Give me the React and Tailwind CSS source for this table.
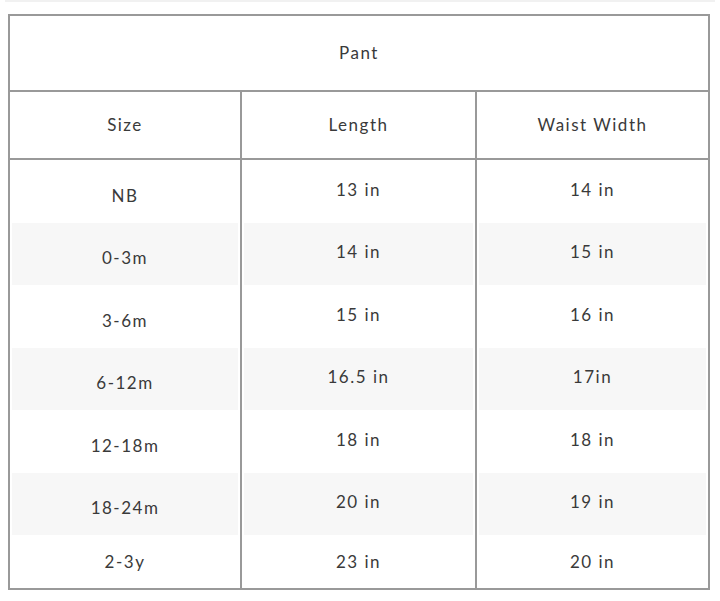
import React from "react";

const rows = [
  ["NB", "13 in", "14 in"],
  ["0-3m", "14 in", "15 in"],
  ["3-6m", "15 in", "16 in"],
  ["6-12m", "16.5 in", "17in"],
  ["12-18m", "18 in", "18 in"],
  ["18-24m", "20 in", "19 in"],
  ["2-3y", "23 in", "20 in"],
];

export default function App() {
  return (
    <div
      className="w-[720px] h-[601px] bg-white text-[#3a3a3a] text-[17px] tracking-[1.5px]"
      style={{ fontFamily: "Lato, 'Open Sans', sans-serif" }}
    >
      <div className="h-[2px] mx-[5px] bg-[#f1f1f1]" />
      <div className="pt-[12px] pl-[8px]">
        <div className="w-[702px] border-2 border-[#999999] flex flex-col">
          <div className="h-[76px] flex items-center justify-center border-b-2 border-[#999999]">
            Pant
          </div>
          <div className="h-[68px] flex border-b-2 border-[#999999]">
            <div className="w-[232px] flex items-center justify-center border-r-2 border-[#999999]">Size</div>
            <div className="w-[235px] flex items-center justify-center border-r-2 border-[#999999]">Length</div>
            <div className="flex-1 flex items-center justify-center">Waist Width</div>
          </div>
          <div className="flex">
            <div className="w-[232px] border-r-2 border-[#999999] flex flex-col">
              {rows.map((r, i) => (
                <div key={i} className={`${i === 6 ? "h-[53px]" : "h-[62.5px]"} px-[2px] flex`}>
                  <div className={`flex-1 flex items-center justify-center ${i === 6 ? "pt-0" : "pt-[8px]"} ${i % 2 === 1 ? "bg-[#f7f7f7]" : ""}`}>
                    {r[0]}
                  </div>
                </div>
              ))}
            </div>
            <div className="w-[235px] border-r-2 border-[#999999] flex flex-col">
              {rows.map((r, i) => (
                <div key={i} className={`${i === 6 ? "h-[53px]" : "h-[62.5px]"} px-[2px] flex`}>
                  <div className={`flex-1 flex items-center justify-center ${i === 6 ? "pt-0" : "pb-[4px]"} ${i % 2 === 1 ? "bg-[#f7f7f7]" : ""}`}>
                    {r[1]}
                  </div>
                </div>
              ))}
            </div>
            <div className="flex-1 flex flex-col">
              {rows.map((r, i) => (
                <div key={i} className={`${i === 6 ? "h-[53px]" : "h-[62.5px]"} px-[2px] flex`}>
                  <div className={`flex-1 flex items-center justify-center ${i === 6 ? "pt-0" : "pb-[4px]"} ${i % 2 === 1 ? "bg-[#f7f7f7]" : ""}`}>
                    {r[2]}
                  </div>
                </div>
              ))}
            </div>
          </div>
        </div>
      </div>
    </div>
  );
}
